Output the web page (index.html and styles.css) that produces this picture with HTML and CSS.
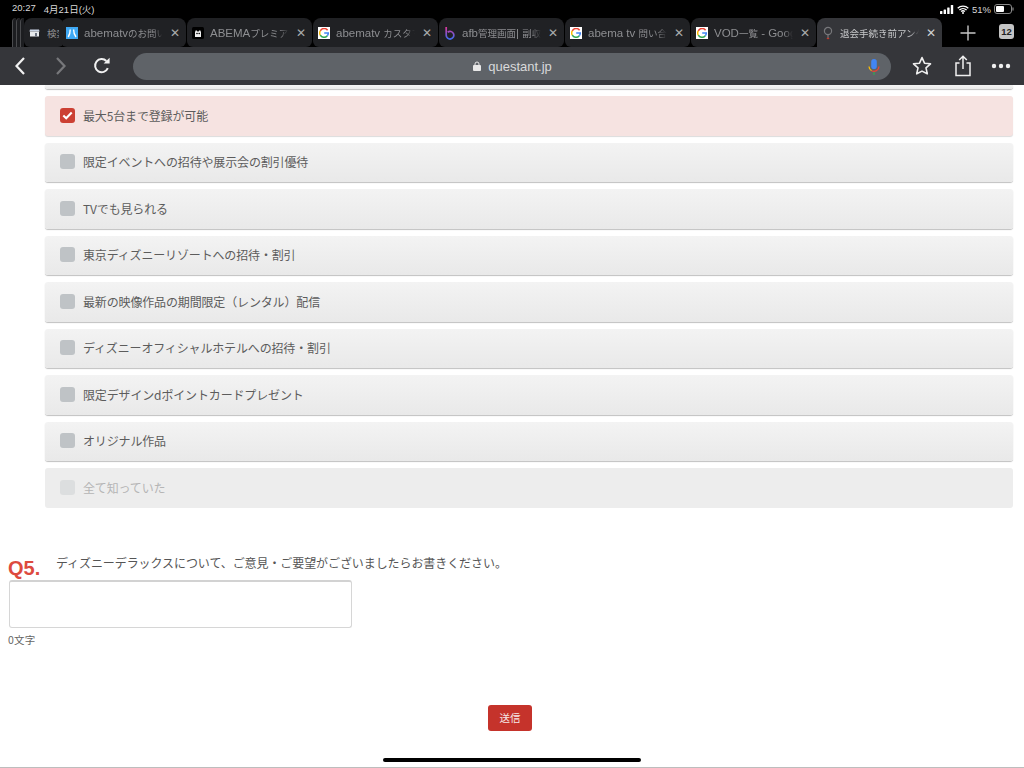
FILE: index.html
```html
<!DOCTYPE html>
<html lang="ja">
<head>
<meta charset="utf-8">
<title>questant.jp</title>
<link rel="stylesheet" href="styles.css">
</head>
<body>
<div class="browser">
  <div class="status">
    <div class="status-left"><span>20:27</span><span>4月21日(火)</span></div>
    <div class="status-right">
      <svg width="14" height="9" viewBox="0 0 14 9"><rect x="0" y="6" width="2.4" height="3" rx=".5" fill="#fff"/><rect x="3.6" y="4.5" width="2.4" height="4.5" rx=".5" fill="#fff"/><rect x="7.2" y="2.5" width="2.4" height="6.5" rx=".5" fill="#fff"/><rect x="10.8" y="0" width="2.4" height="9" rx=".5" fill="#fff"/></svg>
      <svg width="12" height="9" viewBox="0 0 12 9"><path d="M.7 3.2a7.6 7.6 0 0 1 10.6 0M2.4 5a5.2 5.2 0 0 1 7.2 0M4.1 6.6a2.8 2.8 0 0 1 3.8 0" fill="none" stroke="#fff" stroke-width="1.3"/><circle cx="6" cy="8" r="1" fill="#fff"/></svg>
      <span>51%</span>
      <svg width="20" height="10" viewBox="0 0 20 10"><rect x=".5" y=".5" width="17" height="9" rx="2.5" fill="none" stroke="#8a8a8a"/><rect x="2" y="2" width="8" height="6" rx="1" fill="#fff"/><rect x="18.4" y="3.3" width="1.2" height="3.4" rx=".6" fill="#8a8a8a"/></svg>
    </div>
  </div>
  <div class="tabstrip">
    <div class="stack"><i></i><i></i><i></i></div>
    <div class="tab tab-first">
      <svg class="fav" width="11" height="11" viewBox="0 0 11 11"><path d="M1 2.5h9l.6 2H.4z" fill="#c9d4e6"/><rect x="1" y="4.5" width="9" height="5" fill="#e8eaed"/><rect x="6" y="6" width="2" height="3.5" fill="#6b7280"/></svg>
      <span class="tab-title ja">検索</span>
    </div>
    <div class="tab tab-over">
      <svg class="fav" width="12" height="12" viewBox="0 0 12 12"><rect width="12" height="12" fill="#3fa9f5"/><path d="M4.2 2.5C4.2 6 3.6 8 2.2 10M7.6 2.5C7.600 6 8.400 8 10 10" fill="none" stroke="#fff" stroke-width="1.4"/></svg>
      <span class="tab-title">abematv<span class="ja">のお問い</span></span><span class="close">✕</span>
    </div>
    <div class="tab">
      <svg class="fav" width="12" height="12" viewBox="0 0 12 12"><rect width="12" height="12" rx="1.5" fill="#000"/><path d="M3 10V5l1-2 1.5 1.500h1L8 3l1 2v5z" fill="#eee"/><circle cx="5" cy="6.500" r=".8" fill="#000"/><circle cx="7.200" cy="6.500" r=".8" fill="#000"/></svg>
      <span class="tab-title">ABEMA<span class="ja">プレミア</span></span><span class="close">✕</span>
    </div>
    <div class="tab">
      <span class="gbox"><svg width="10" height="10" viewBox="0 0 10 10"><path d="M8.6 2.2A4.3 4.3 0 0 0 1.3 2.8" fill="none" stroke="#ea4335" stroke-width="1.5"/><path d="M1.3 2.8a4.3 4.3 0 0 0 0 4.4" fill="none" stroke="#fbbc05" stroke-width="1.5"/><path d="M1.3 7.2a4.3 4.3 0 0 0 7 .6" fill="none" stroke="#34a853" stroke-width="1.5"/><path d="M8.3 7.8A4.3 4.3 0 0 0 9.3 5H5.2" fill="none" stroke="#4285f4" stroke-width="1.5"/></svg></span>
      <span class="tab-title">abematv <span class="ja">カスタマ</span></span><span class="close">✕</span>
    </div>
    <div class="tab">
      <svg class="fav" width="12" height="14" viewBox="0 0 12 14"><defs><linearGradient id="afb" x1="0" y1="0" x2="0" y2="1"><stop offset="0" stop-color="#e0359a"/><stop offset="1" stop-color="#3f6bee"/></linearGradient></defs><path d="M2.2 1v8.2a3.8 3.8 0 1 0 1.5-3" fill="none" stroke="url(#afb)" stroke-width="1.7"/></svg>
      <span class="tab-title">afb<span class="ja">管理画面</span>| <span class="ja">副収</span></span><span class="close">✕</span>
    </div>
    <div class="tab">
      <span class="gbox"><svg width="10" height="10" viewBox="0 0 10 10"><path d="M8.6 2.2A4.3 4.3 0 0 0 1.3 2.8" fill="none" stroke="#ea4335" stroke-width="1.5"/><path d="M1.3 2.8a4.3 4.3 0 0 0 0 4.4" fill="none" stroke="#fbbc05" stroke-width="1.5"/><path d="M1.3 7.2a4.3 4.3 0 0 0 7 .6" fill="none" stroke="#34a853" stroke-width="1.5"/><path d="M8.3 7.8A4.3 4.3 0 0 0 9.3 5H5.2" fill="none" stroke="#4285f4" stroke-width="1.5"/></svg></span>
      <span class="tab-title">abema tv <span class="ja">問い合わ</span></span><span class="close">✕</span>
    </div>
    <div class="tab">
      <span class="gbox"><svg width="10" height="10" viewBox="0 0 10 10"><path d="M8.6 2.2A4.3 4.3 0 0 0 1.3 2.8" fill="none" stroke="#ea4335" stroke-width="1.5"/><path d="M1.3 2.8a4.3 4.3 0 0 0 0 4.4" fill="none" stroke="#fbbc05" stroke-width="1.5"/><path d="M1.3 7.2a4.3 4.3 0 0 0 7 .6" fill="none" stroke="#34a853" stroke-width="1.5"/><path d="M8.3 7.8A4.3 4.3 0 0 0 9.3 5H5.2" fill="none" stroke="#4285f4" stroke-width="1.5"/></svg></span>
      <span class="tab-title">VOD<span class="ja">一覧</span> - Googl</span><span class="close">✕</span>
    </div>
    <div class="tab tab-active">
      <svg class="fav" width="12" height="14" viewBox="0 0 12 14"><circle cx="6" cy="5" r="3.6" fill="none" stroke="#77787b" stroke-width="1.2"/><path d="M6 8.6V12" stroke="#77787b" stroke-width="1.2"/><path d="M4.8 12.5h2.4" stroke="#c0392b" stroke-width="1.3"/></svg>
      <span class="tab-title ja">退会手続き前アンケ</span><span class="close">✕</span>
    </div>
    <div class="newtab"><svg width="16" height="16" viewBox="0 0 16 16"><path d="M8 .5v15M.5 8h15" stroke="#c6c6c6" stroke-width="1.4"/></svg></div>
    <div class="tabcount">12</div>
  </div>
  <div class="toolbar">
    <div class="nav">
      <svg width="12" height="20" viewBox="0 0 12 20"><path d="M10 2 2.5 10 10 18" fill="none" stroke="#f1f1f1" stroke-width="2.2"/></svg>
      <svg width="12" height="20" viewBox="0 0 12 20"><path d="M2 2l7.5 8L2 18" fill="none" stroke="#77787b" stroke-width="2.2"/></svg>
      <svg class="reload" width="18" height="18" viewBox="0 0 18 18"><path d="M14.8 11.2A6.6 6.6 0 1 1 13.4 4" fill="none" stroke="#f1f1f1" stroke-width="2"/><path d="M10.6 6.6h6V.8z" fill="#f1f1f1"/></svg>
    </div>
    <div class="omnibox">
      <span class="url"><svg width="8" height="10" viewBox="0 0 8 10"><path d="M2 4.500V3a2 2 0 0 1 4 0v1.500" fill="none" stroke="#e8e8e8" stroke-width="1"/><rect y="4" width="8" height="6" rx="1" fill="#e8e8e8"/></svg>questant.jp</span>
      <svg class="mic" width="12" height="18" viewBox="0 0 12 18"><rect x="3.2" y="1" width="5.6" height="10" rx="2.8" fill="#4285f4"/><path d="M1 8.500a5 5 0 0 0 2.600 4.200" fill="none" stroke="#fbbc05" stroke-width="1.3"/><path d="M3.600 12.700a5 5 0 0 0 7.400-4.200" fill="none" stroke="#ea4335" stroke-width="1.3"/><path d="M6 14v3" stroke="#34a853" stroke-width="1.3"/></svg>
    </div>
    <div class="actions">
      <svg width="20" height="20" viewBox="0 0 20 20"><path d="M10 1.600l2.500 5.600 6 .6-4.500 4 1.300 6L10 15.100l-5.300 2.700 1.300-6-4.500-4 6-.6z" fill="none" stroke="#efefef" stroke-width="1.600" stroke-linejoin="round"/></svg>
      <svg width="18" height="22" viewBox="0 0 18 22"><path d="M5.500 8H2v12.600h14V8h-3.500M9 14V1.500M5.200 5 9 1.200 12.800 5" fill="none" stroke="#efefef" stroke-width="1.500"/></svg>
      <svg width="20" height="6" viewBox="0 0 20 6"><circle cx="3" cy="3" r="2.200" fill="#efefef"/><circle cx="10" cy="3" r="2.200" fill="#efefef"/><circle cx="17" cy="3" r="2.200" fill="#efefef"/></svg>
    </div>
  </div>
</div>
<main class="page">
  <div class="options">
    <div class="option option-cut"></div>
    <div class="option option-checked">
      <span class="check"><svg width="11" height="9" viewBox="0 0 11 9"><path d="M1.300 4.500 4.200 7.300 9.700 1.500" fill="none" stroke="#fff" stroke-width="2.100"/></svg></span>
      <span>最大5台まで登録が可能</span>
    </div>
    <div class="option"><span class="check"></span><span>限定イベントへの招待や展示会の割引優待</span></div>
    <div class="option"><span class="check"></span><span>TVでも見られる</span></div>
    <div class="option"><span class="check"></span><span>東京ディズニーリゾートへの招待・割引</span></div>
    <div class="option"><span class="check"></span><span>最新の映像作品の期間限定（レンタル）配信</span></div>
    <div class="option"><span class="check"></span><span>ディズニーオフィシャルホテルへの招待・割引</span></div>
    <div class="option"><span class="check"></span><span>限定デザインdポイントカードプレゼント</span></div>
    <div class="option"><span class="check"></span><span>オリジナル作品</span></div>
    <div class="option option-disabled"><span class="check"></span><span>全て知っていた</span></div>
  </div>
  <section class="question">
    <div class="q-head">
      <span class="q-num">Q5.</span>
      <span class="q-text">ディズニーデラックスについて、ご意見・ご要望がございましたらお書きください。</span>
    </div>
    <div class="answer"></div>
    <div class="count">0文字</div>
  </section>
  <div class="submit-row"><button class="submit" type="button">送信</button></div>
  <div class="home-row"><div class="home"></div></div>
</main>
</body>
</html>
```
FILE: styles.css
```css
* { box-sizing: border-box; }
html, body { margin: 0; padding: 0; }
body {
  width: 1024px;
  height: 768px;
  overflow: hidden;
  background: #fff;
  font-family: "Liberation Sans", "Noto Sans CJK JP", sans-serif;
  color: #555;
}
svg { display: block; flex: none; }

.browser { height: 85px; background: #000; display: flex; flex-direction: column; }

.status { height: 18px; display: flex; justify-content: space-between; align-items: center; padding: 0 8px 0 12px; color: #d8d8d8; font-size: 9.500px; }
.status-left { display: flex; gap: 8px; }
.status-right { display: flex; align-items: center; gap: 3px; margin-right: 2px; }

.tabstrip { height: 29px; display: flex; align-items: stretch; position: relative; padding-left: 12px; }
.stack { width: 12px; display: flex; flex: none; }
.stack i { width: 4px; border-left: 1px solid #4a4b4e; border-radius: 6px 0 0 0; background: #1c1d20; }
.tab {
  width: 125px;
  flex: none;
  margin-right: 1px;
  display: flex;
  align-items: center;
  gap: 6px;
  padding: 0 5px 0 4px;
  background: #202124;
  border-radius: 8px 8px 6px 6px;
  color: #8d8e91;
  font-size: 11.500px;
}
.ja { font-size: 9.500px; font-family: "Noto Sans CJK JP", sans-serif; }
.tab-first { width: 40px; margin-right: 0; overflow: hidden; gap: 7px; }
.tab-over { margin-left: -3px; position: relative; }
.tab-active { background: #35363a; color: #c8c9cb; border-radius: 8px 8px 0 0; }
.fav { margin-left: 1px; }
.gbox { width: 12px; height: 12px; background: #fff; display: flex; align-items: center; justify-content: center; flex: none; margin-left: 1px; }
.tab-title { flex: 1; min-width: 0; white-space: nowrap; overflow: hidden; -webkit-mask-image: linear-gradient(to right, #000 88%, transparent); mask-image: linear-gradient(to right, #000 88%, transparent); }
.tab-first .tab-title { -webkit-mask-image: none; mask-image: none; }
.close { flex: none; width: 12px; text-align: center; font-size: 12px; color: #a9aaac; line-height: 1; }
.tab-active .close { color: #d0d1d3; }
.newtab { width: 50px; flex: none; display: flex; align-items: center; justify-content: center; }
.tabcount { width: 15px; height: 15px; margin: 6px 0 0 6px; flex: none; background: #c4c4c4; color: #222; border-radius: 3px; font-size: 9.500px; font-weight: 700; display: flex; align-items: center; justify-content: center; }

.toolbar { height: 38px; background: #35363a; display: flex; align-items: center; }
.nav { display: flex; align-items: center; width: 133px; padding-left: 14px; gap: 29px; flex: none; }
.nav .reload { margin-left: -3px; }
.omnibox { width: 758px; height: 27px; background: #5f6368; border-radius: 14px; display: flex; align-items: center; position: relative; justify-content: center; flex: none; }
.url { display: flex; align-items: center; gap: 7px; color: #d9dadb; font-size: 13px; margin-left: 1px; }
.mic { position: absolute; right: 11px; top: 5px; }
.actions { display: flex; align-items: center; flex: none; padding-left: 21px; gap: 22px; }
.actions svg:last-child { margin-left: -3px; }

.page { height: 683px; display: flex; flex-direction: column; position: relative; border-bottom: 1px solid #bdbdbd; }

.options { margin: 0 11px 0 45px; display: flex; flex-direction: column; gap: 7px; }
.option {
  height: 39.500px;
  display: flex;
  align-items: center;
  gap: 8px;
  padding: 0 0 1px 15px;
  border-radius: 3px;
  background: linear-gradient(#f3f3f3, #e9e9e9);
  box-shadow: 0 1px 1px rgba(0,0,0,.25);
  font-size: 12px;
  letter-spacing: -.15px;
  color: #5c5c5c;
  font-family: "Noto Sans CJK JP", sans-serif;
}
.option-cut { height: 4px; padding: 0; border-radius: 0 0 3px 3px; }
.check { width: 15px; height: 15px; border-radius: 3px; background: #bfc3c6; flex: none; display: flex; align-items: center; justify-content: center; }
.option-checked { background: #f6e3e1; box-shadow: 0 1px 1px rgba(0,0,0,.14); }
.option-checked .check { background: #cc4033; }
.option-disabled { background: #ededed; box-shadow: none; color: #b5b5b5; }
.option-disabled .check { background: #dcdedf; }

.question { margin-top: 43px; padding-left: 8px; }
.q-head { display: flex; align-items: flex-start; height: 29px; }
.q-num { width: 48px; flex: none; font-family: "Liberation Sans", sans-serif; font-size: 20px; font-weight: 700; color: #dd4a3e; line-height: 22px; margin-top: 6px; }
.q-text { font-family: "Noto Sans CJK JP", sans-serif; font-size: 12px; color: #555; line-height: 18px; margin-top: 3px; white-space: nowrap; letter-spacing: -.08px; }
.answer { width: 343px; height: 48px; margin-left: 1px; border: 1px solid #d6d6d6; border-top: 2px solid #d2d2d2; border-radius: 3px; background: #fff; }
.count { font-family: "Noto Sans CJK JP", sans-serif; font-size: 10.500px; color: #666; line-height: 14px; margin-top: 5px; letter-spacing: .2px; }

.submit-row { display: flex; justify-content: center; margin-top: 58px; padding-right: 4px; }
.submit { width: 44px; height: 26px; border: 0; border-radius: 3px; background: #c5332b; color: #f5e9e8; font-family: "Noto Sans CJK JP", sans-serif; font-size: 10.500px; padding: 0; }

.home-row { position: absolute; left: 0; right: 0; bottom: 5px; display: flex; justify-content: center; }
.home { width: 258px; height: 4px; border-radius: 2px; background: #000; }
```
